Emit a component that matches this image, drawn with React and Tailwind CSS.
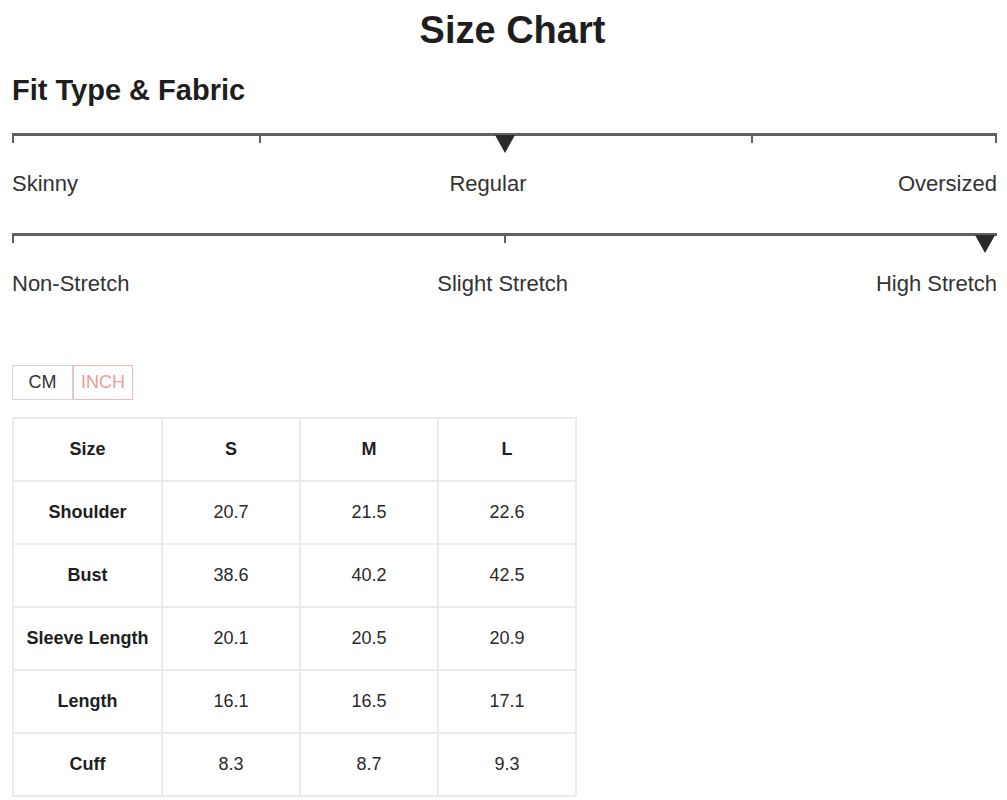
import React from "react";

const rows = [
  ["Shoulder", "20.7", "21.5", "22.6"],
  ["Bust", "38.6", "40.2", "42.5"],
  ["Sleeve Length", "20.1", "20.5", "20.9"],
  ["Length", "16.1", "16.5", "17.1"],
  ["Cuff", "8.3", "8.7", "9.3"],
];

const Marker = ({ className }) => (
  <div
    className={`absolute top-[2px] w-0 h-0 border-l-[10px] border-r-[10px] border-t-[18px] border-l-transparent border-r-transparent border-t-[#2a2a2a] ${className}`}
  />
);

const Tick = ({ className }) => (
  <div className={`absolute top-0 w-[2px] h-[10px] bg-[#606060] ${className}`} />
);

const Scale = ({ ticks, marker, labels, className }) => (
  <div className={className}>
    <div className="relative h-[3px] bg-[#606060]">
      {ticks.map((t) => (
        <Tick key={t} className={t} />
      ))}
      <Marker className={marker} />
    </div>
    <div className="mt-[34px] h-[26px] flex items-center justify-between text-[22px] text-[#333]">
      {labels.map((l) => (
        <span key={l}>{l}</span>
      ))}
    </div>
  </div>
);

export default function App() {
  return (
    <div className="w-[1007px] min-h-[800px] bg-white px-[12px] font-['Liberation_Sans',Arial,sans-serif] text-[#1e1e1e]">
      <h1 className="h-[60px] pl-[18px] flex items-center justify-center text-[38px] font-bold">
        Size Chart
      </h1>
      <h2 className="h-[62px] flex items-center text-[29px] font-bold">
        Fit Type &amp; Fabric
      </h2>

      {/* fit type */}
      <Scale
        className="mt-[11px] mr-[-2px]"
        ticks={["left-0", "left-[247px]", "left-[739px]", "right-0"]}
        marker="left-[calc(50%-10px)]"
        labels={["Skinny", "Regular", "Oversized"]}
      />

      {/* stretch */}
      <Scale
        className="mt-[37px] mr-[-2px]"
        ticks={["left-0", "left-[492px]"]}
        marker="right-[2px]"
        labels={["Non-Stretch", "Slight Stretch", "High Stretch"]}
      />

      {/* unit toggle */}
      <div className="mt-[69px] flex h-[35px] text-[18px]">
        <div className="w-[61px] flex items-center justify-center border border-[#d4d4d4] text-[#333]">
          CM
        </div>
        <div className="w-[60px] flex items-center justify-center border border-[#f2b8b8] text-[#f19a9a]">
          INCH
        </div>
      </div>

      {/* size table */}
      <table className="mt-[17px] w-[563px] border-collapse text-[18px] text-[#2a2a2a] table-fixed">
        <colgroup>
          <col className="w-[149px]" />
          <col className="w-[138px]" />
          <col className="w-[138px]" />
          <col className="w-[138px]" />
        </colgroup>
        <thead>
          <tr className="h-[63px]">
            {["Size", "S", "M", "L"].map((h) => (
              <th key={h} className="border-2 border-[#ebebeb] text-center font-bold text-[#1e1e1e]">
                {h}
              </th>
            ))}
          </tr>
        </thead>
        <tbody>
          {rows.map((r) => (
            <tr key={r[0]} className="h-[63px]">
              <td className="border-2 border-[#ebebeb] text-center font-bold text-[#1e1e1e]">
                {r[0]}
              </td>
              {r.slice(1).map((v, i) => (
                <td key={i} className="border-2 border-[#ebebeb] text-center">
                  {v}
                </td>
              ))}
            </tr>
          ))}
        </tbody>
      </table>
    </div>
  );
}
